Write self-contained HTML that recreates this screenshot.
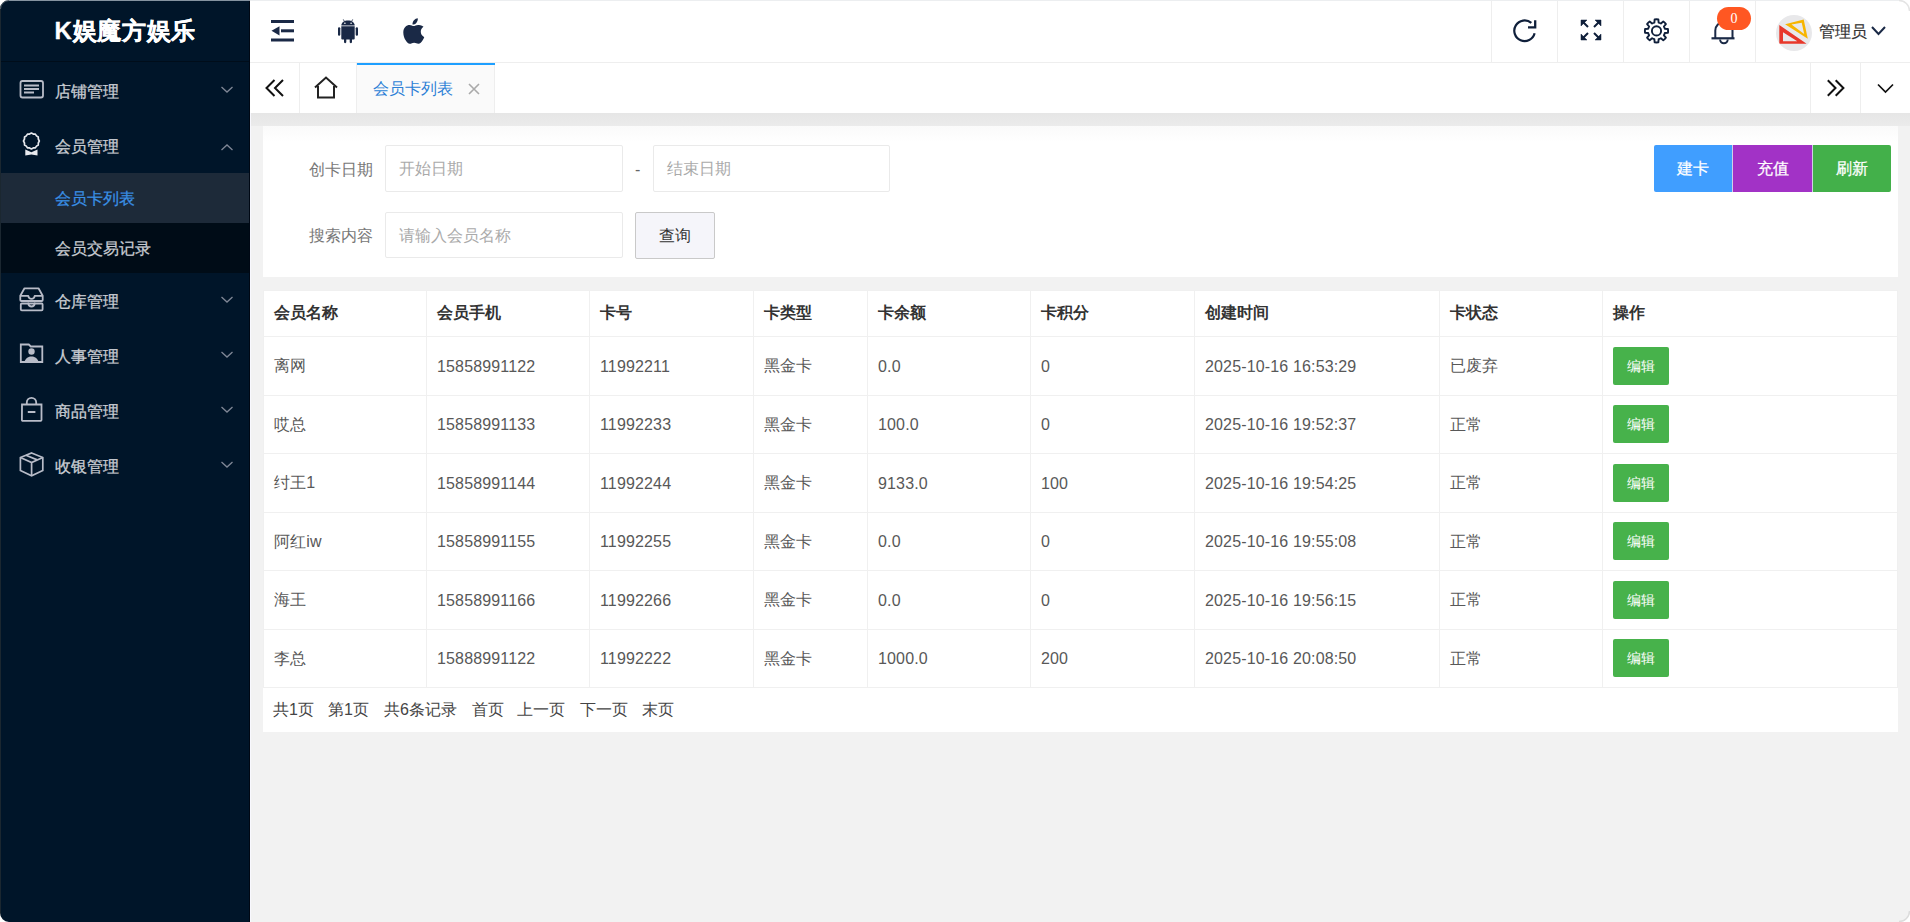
<!DOCTYPE html>
<html><head><meta charset="utf-8">
<style>
*{box-sizing:border-box;margin:0;padding:0}
html,body{width:1910px;height:922px;overflow:hidden;background:#f2f2f2;font-family:"Liberation Sans",sans-serif;font-size:16px;color:#333}
svg{position:absolute;overflow:visible}
#side{position:absolute;left:0;top:0;width:250px;height:922px;background:#001529}
#logo{position:absolute;left:0;top:0;width:250px;height:62px;border-bottom:1px solid #000d1a;color:#fff;font-size:24px;font-weight:bold;text-align:center;line-height:62px;letter-spacing:0.7px;text-indent:0.7px;-webkit-text-stroke:0.3px #fff}
.mi{position:absolute;left:0;width:250px;height:55px;color:#c8ccd2;font-size:16px}
.mi .t{position:absolute;left:55px;top:19.5px;line-height:20px;-webkit-text-stroke:0.3px #c8ccd2}
.sub{position:absolute;left:0;width:250px;height:50px;background:#000c17;color:#c8ccd2}
.sub .t{position:absolute;left:55px;top:16px;line-height:20px;-webkit-text-stroke:0.25px currentColor}
#hdr{position:absolute;left:250px;top:0;width:1660px;height:63px;background:#fff;border-bottom:1px solid #eee}
.hcell{position:absolute;top:0;height:62px;width:66px;border-left:1px solid #eee}
#tabs{position:absolute;left:250px;top:63px;width:1660px;height:50px;background:#fff}
#cont{position:absolute;left:250px;top:113px;width:1660px;height:809px;background:#f2f2f2}
.card{position:absolute;background:#fff}
.lbl{position:absolute;color:#777;line-height:20px}
.inp{position:absolute;border:1px solid #eaeaea;border-radius:2px;background:#fff;color:#aaa;line-height:20px;padding-left:13px}
.btn{position:absolute;color:#fff;text-align:center;line-height:47px;-webkit-text-stroke:0.25px #fff}
table{position:absolute;border-collapse:collapse;background:#fff;table-layout:fixed}
td,th{border:1px solid #f0f0f0;padding:0 0 0 10px;text-align:left;font-weight:normal;color:#333;white-space:nowrap}
th{font-weight:bold;height:46px;padding-top:0;color:#333}
td{height:58.5px;padding-top:2px;color:#585858;letter-spacing:0.15px}
td.op{padding-top:0}
.ed{display:inline-block;width:56px;letter-spacing:0;height:38px;line-height:38px;background:#47b24b;color:#fff;font-size:14px;text-align:center;border-radius:2px}
.pg{position:absolute;line-height:20px;color:#444}
</style></head><body>
<div id="side">
  <div id="logo">K娱魔方娱乐</div>
  <div class="mi" style="top:62px"><span class="t">店铺管理</span>
    <svg width="250" height="55" style="left:0;top:0" fill="none" stroke="#b8bcc8" stroke-width="1.8">
      <rect x="20.5" y="19" width="22.5" height="16.5" rx="2"/>
      <path d="M24 23.5h15M24 27h15M24 30.5h10"/>
      <path d="M221.5 25l5.5 5 5.5-5" stroke="#7f8796" stroke-width="1.3"/>
    </svg>
  </div>
  <div class="mi" style="top:117px"><span class="t">会员管理</span>
    <svg width="250" height="55" style="left:0;top:0" fill="none" stroke="#e8eaee" stroke-width="1.8">
      <path d="M39.30 24.00 L38.35 25.86 L38.24 27.95 L36.49 29.09 L35.35 30.84 L33.26 30.95 L31.40 31.90 L29.54 30.95 L27.45 30.84 L26.31 29.09 L24.56 27.95 L24.45 25.86 L23.50 24.00 L24.45 22.14 L24.56 20.05 L26.31 18.91 L27.45 17.16 L29.54 17.05 L31.40 16.10 L33.26 17.05 L35.35 17.16 L36.49 18.91 L38.24 20.05 L38.35 22.14Z" stroke-width="1.7" stroke-linejoin="round"/>
      <path d="M25.3 32.6l6.1 2.6 6.1-2.6v5.8l-6.1-1-6.1 1z" fill="#e8eaee" stroke="none"/>
      <path d="M221.5 33l5.5-5 5.5 5" stroke="#7f8796" stroke-width="1.3"/>
    </svg>
  </div>
  <div class="sub" style="top:173px;background:#1d2a39;color:#3a90e6"><span class="t">会员卡列表</span></div>
  <div class="sub" style="top:223px"><span class="t">会员交易记录</span></div>
  <div class="mi" style="top:272px"><span class="t">仓库管理</span>
    <svg width="250" height="55" style="left:0;top:0" fill="none" stroke="#b8bcc8" stroke-width="1.8" stroke-linejoin="round" stroke-linecap="round">
      <path d="M24.5 16.3h14l4.2 7.5v4.2a1 1 0 0 1-1 1h-20.4a1 1 0 0 1-1-1v-4.2z"/>
      <path d="M20.8 23.8h7.5c0.3 2 1.5 3 3.2 3s2.9-1 3.2-3h7.5"/>
      <path d="M21.8 31.5h19.8a1 1 0 0 1 1 1v4.8a1 1 0 0 1-1 1h-19.8a1 1 0 0 1-1-1v-4.8a1 1 0 0 1 1-1z"/>
      <path d="M28.3 31.5c0.3 2 1.5 3 3.2 3s2.9-1 3.2-3"/>
      <path d="M221.5 25l5.5 5 5.5-5" stroke="#7f8796" stroke-width="1.3" stroke-linecap="butt" stroke-linejoin="miter"/>
    </svg>
  </div>
  <div class="mi" style="top:327px"><span class="t">人事管理</span>
    <svg width="250" height="55" style="left:0;top:0" fill="none" stroke="#b8bcc8" stroke-width="1.8">
      <path d="M20.8 17.5h8l2 2h11.5v15.5h-21.5z"/>
      <circle cx="31.5" cy="24.5" r="3.2" fill="#b8bcc8" stroke="none"/>
      <path d="M24.5 35c1-4 4-5.5 7-5.5s6 1.5 7 5.5z" fill="#b8bcc8" stroke="none"/>
      <path d="M221.5 25l5.5 5 5.5-5" stroke="#7f8796" stroke-width="1.3"/>
    </svg>
  </div>
  <div class="mi" style="top:382px"><span class="t">商品管理</span>
    <svg width="250" height="55" style="left:0;top:0" fill="none" stroke="#b8bcc8" stroke-width="1.8">
      <path d="M22 22.5h19.5v15.5a0.8 0.8 0 0 1-0.8 0.8h-18a0.8 0.8 0 0 1-0.8-0.8z"/>
      <path d="M26.8 22.5v-2a4.7 4.7 0 0 1 9.4 0v2"/>
      <path d="M27.8 30h7.6" stroke-width="2"/>
      <path d="M221.5 25l5.5 5 5.5-5" stroke="#7f8796" stroke-width="1.3"/>
    </svg>
  </div>
  <div class="mi" style="top:437px"><span class="t">收银管理</span>
    <svg width="250" height="55" style="left:0;top:0" fill="none" stroke="#b8bcc8" stroke-width="1.7">
      <path d="M31.6 16l11.2 4.5v13l-11.2 5.3-11.2-5.3v-13z"/>
      <path d="M20.4 20.5l11.2 5 11.2-5M31.6 25.5v13.3"/>
      <path d="M26 18.3l11.2 4.6"/>
      <path d="M221.5 25l5.5 5 5.5-5" stroke="#7f8796" stroke-width="1.3"/>
    </svg>
  </div>
</div>
<div style="position:absolute;left:249px;top:0;width:1px;height:922px;background:#000814;z-index:5"></div>
<div style="position:absolute;left:250px;top:113px;width:1px;height:809px;background:#f8f8fe;z-index:5"></div>
<div id="hdr">
  <svg width="30" height="30" style="left:21px;top:20px" fill="#1a2946">
    <rect x="0" y="0" width="23" height="3"/><rect x="10" y="9.3" width="13" height="3"/><rect x="0" y="18.5" width="23" height="3"/>
    <path d="M0.5 10.8l8-4.6v9.2z"/>
  </svg>
  <svg width="20" height="25" style="left:87.7px;top:18.8px" viewBox="0 0 20 25" fill="#1a2946">
    <path d="M5.3 0.4l1.2 2.2M14.7 0.4l-1.2 2.2" stroke="#1a2946" stroke-width="0.8"/>
    <path d="M3.3 6.4c0.2-2.9 3-4.9 6.7-4.9s6.5 2 6.7 4.9z"/>
    <circle cx="6.9" cy="4.2" r="0.8" fill="#fff"/><circle cx="13.1" cy="4.2" r="0.8" fill="#fff"/>
    <path d="M3.3 7.3h13.4v12.2a1 1 0 0 1-1 1h-11.4a1 1 0 0 1-1-1z"/>
    <rect x="0" y="8.2" width="2.3" height="8.6" rx="1.15"/><rect x="17.7" y="8.2" width="2.3" height="8.6" rx="1.15"/>
    <rect x="6" y="19" width="2.3" height="5.2" rx="1.1"/><rect x="11.7" y="19" width="2.3" height="5.2" rx="1.1"/>
  </svg>
  <svg width="22" height="26" style="left:153px;top:18px" viewBox="0 0 22 26" fill="#1a2946">
    <path d="M14.8 0.3c0.2 2-0.6 3.6-1.5 4.6-1 1.1-2.4 1.8-3.8 1.7-0.2-1.7 0.6-3.4 1.5-4.4 1-1.1 2.5-1.8 3.8-1.9z"/>
    <path d="M20.6 8.8c-0.1 0.1-2.8 1.6-2.8 4.9 0 3.8 3.4 5.2 3.5 5.2-0.1 0.1-0.6 1.8-1.8 3.6-1.1 1.6-2.3 3.2-4.1 3.2s-2.3-1-4.3-1-2.6 1.1-4.3 1.1-2.9-1.6-4-3.2C1.4 20.7 0.3 17.5 0.3 14.5c0-4.9 3.2-7.5 6.3-7.5 1.7 0 3 1.1 4.1 1.1 1 0 2.5-1.2 4.4-1.2 0.7 0 3.4 0.1 5.5 1.9z"/>
  </svg>
  <div class="hcell" style="left:1241px"><svg width="66" height="62" style="left:0;top:0" fill="none" stroke="#0f1f3a" stroke-width="2.2">
    <path d="M42.6 33.2A10.3 10.3 0 1 1 39.3 22.9"/><path d="M36 27.3H43.2V20.3" stroke-width="2.3"/></svg></div>
  <div class="hcell" style="left:1307px"><svg width="22" height="22" style="left:22px;top:19px" viewBox="0 0 22 22" fill="#0f1f3a" stroke="#0f1f3a" stroke-width="2">
    <path d="M2 2l6 6M20 2l-6 6M2 20l6-6M20 20l-6-6" fill="none"/>
    <path d="M1 1h6l-6 6zM21 1h-6l6 6zM1 21h6l-6-6zM21 21h-6l6-6z" stroke-width="0.5"/>
  </svg></div>
  <div class="hcell" style="left:1373px"><svg width="66" height="62" style="left:0;top:0" fill="none" stroke="#0f1f3a" stroke-width="1.9" stroke-linejoin="round">
    <path d="M30.37 22.57L30.65 19.45A11.60 11.60 0 0 1 34.35 19.45L34.63 22.57A8.60 8.60 0 0 1 36.89 23.50L39.29 21.50A11.60 11.60 0 0 1 41.90 24.11L39.90 26.51A8.60 8.60 0 0 1 40.83 28.77L43.95 29.05A11.60 11.60 0 0 1 43.95 32.75L40.83 33.03A8.60 8.60 0 0 1 39.90 35.29L41.90 37.69A11.60 11.60 0 0 1 39.29 40.30L36.89 38.30A8.60 8.60 0 0 1 34.63 39.23L34.35 42.35A11.60 11.60 0 0 1 30.65 42.35L30.37 39.23A8.60 8.60 0 0 1 28.11 38.30L25.71 40.30A11.60 11.60 0 0 1 23.10 37.69L25.10 35.29A8.60 8.60 0 0 1 24.17 33.03L21.05 32.75A11.60 11.60 0 0 1 21.05 29.05L24.17 28.77A8.60 8.60 0 0 1 25.10 26.51L23.10 24.11A11.60 11.60 0 0 1 25.71 21.50L28.11 23.50A8.60 8.60 0 0 1 30.37 22.57Z"/><circle cx="32.5" cy="30.9" r="4.6"/></svg></div>
  <div class="hcell" style="left:1439px">
    <svg width="66" height="62" style="left:0;top:0" fill="none" stroke="#1a2946" stroke-width="2">
      <path d="M25.3 38v-7.5a8.6 8.6 0 0 1 17.2 0v7.5"/><path d="M21.5 38.3h23" stroke-width="2.2"/><path d="M30.1 39.5a3.8 3.8 0 0 0 7.6 0"/>
    </svg>
    <div style="position:absolute;left:27px;top:7px;width:34px;height:23px;border-radius:11.5px;background:#ff5722;color:#fff;font-size:14px;text-align:center;line-height:23px;font-family:'Liberation Serif',serif">0</div>
  </div>
  <div class="hcell" style="left:1505px;width:155px">
    <div style="position:absolute;left:20px;top:15px;width:36px;height:36px;border-radius:50%;background:#e8e8ea;overflow:hidden">
      <svg width="36" height="36" style="left:0;top:0" viewBox="0 0 36 36">
        <path fill-rule="evenodd" fill="#e8372a" d="M3.3 10.1L30.6 28.7H3.3z M7 17.2V26.2H21.3z"/>
        <path fill-rule="evenodd" fill="#f7b500" d="M9.1 9.2L27.7 4.5L31.8 23.8z M15.5 9.6L28.2 18.9L25.7 7.7z"/>
      </svg>
    </div>
    <div style="position:absolute;left:63px;top:21.5px;line-height:20px;color:#333;font-size:16px;-webkit-text-stroke:0.2px #333">管理员</div>
    <svg width="16" height="10" style="left:115px;top:26px" fill="none" stroke="#1a2946" stroke-width="2"><path d="M1 1l6.5 7 6.5-7"/></svg>
  </div>
</div>
<div id="tabs">
  <svg width="22" height="20" style="left:15px;top:15px" fill="none" stroke="#111" stroke-width="2"><path d="M9.5 2l-8 8 8 8M18 2l-8 8 8 8"/></svg>
  <div style="position:absolute;left:49px;top:0;width:1px;height:50px;background:#eee"></div>
  <svg width="26" height="24" style="left:64px;top:13px" fill="none" stroke="#222" stroke-width="2"><path d="M1 11.5L12 1.5l11 10"/><path d="M4 10v11.5h16V10"/></svg>
  <div style="position:absolute;left:106px;top:0;width:139px;height:50px;background:#fafafa;border-left:1px solid #eee;border-right:1px solid #eee">
    <div style="position:absolute;left:0;top:0;width:138px;height:2px;background:#1e9fff"></div>
    <div style="position:absolute;left:16px;top:16px;line-height:20px;color:#2b7fd6">会员卡列表</div>
    <svg width="12" height="12" style="left:111px;top:20px" fill="none" stroke="#aaa" stroke-width="1.6"><path d="M1 1l10 10M11 1l-10 10"/></svg>
  </div>
  <div style="position:absolute;left:1560px;top:0;width:1px;height:50px;background:#eee"></div>
  <svg width="20" height="20" style="left:1577px;top:15px" fill="none" stroke="#111" stroke-width="2"><path d="M0.8 2.3l7.7 7.7-7.7 7.7M8.7 2.3l7.7 7.7-7.7 7.7"/></svg>
  <div style="position:absolute;left:1610px;top:0;width:1px;height:50px;background:#eee"></div>
  <svg width="18" height="12" style="left:1627px;top:19.5px" fill="none" stroke="#111" stroke-width="1.7"><path d="M1 1.5l7.5 7.5 7.5-7.5"/></svg>
</div>
<div id="cont">
  <div style="position:absolute;left:0;top:0;width:1660px;height:13px;background:linear-gradient(#e6e6e6,#ebebeb)"></div>
  <div class="card" style="left:13px;top:13px;width:1635px;height:151px;background:linear-gradient(#fafafa,#fff 16px)">
    <div class="lbl" style="left:46px;top:34px">创卡日期</div>
    <div class="inp" style="left:122px;top:19px;width:238px;height:47px;line-height:45px">开始日期</div>
    <div class="lbl" style="left:372px;top:34px;color:#666">-</div>
    <div class="inp" style="left:390px;top:19px;width:237px;height:47px;line-height:45px">结束日期</div>
    <div class="lbl" style="left:46px;top:100px">搜索内容</div>
    <div class="inp" style="left:122px;top:86px;width:238px;height:46px;line-height:45px">请输入会员名称</div>
    <div style="position:absolute;left:372px;top:86px;width:80px;height:47px;border:1px solid #c9c9c9;border-radius:2px;background:#f5f5fa;text-align:center;line-height:45px;color:#333">查询</div>
    <div style="position:absolute;left:1465px;top:19px;width:90px;height:47px;background:#d0d0e6"></div>
    <div class="btn" style="left:1391px;top:19px;width:78px;height:47px;background:#409eff;border-radius:2px 0 0 2px">建卡</div>
    <div class="btn" style="left:1470px;top:19px;width:79px;height:47px;background:#a232c6">充值</div>
    <div class="btn" style="left:1550px;top:19px;width:78px;height:47px;background:#43b04a;border-radius:0 2px 2px 0">刷新</div>
  </div>
  <div class="card" style="left:13px;top:177px;width:1635px;height:442px"></div>
<table style="left:13px;top:177px;width:1634px">
<colgroup><col style="width:163px"><col style="width:163px"><col style="width:164px"><col style="width:114px"><col style="width:163px"><col style="width:164px"><col style="width:245px"><col style="width:163px"><col style="width:295px"></colgroup>
<tr><th>会员名称</th><th>会员手机</th><th>卡号</th><th>卡类型</th><th>卡余额</th><th>卡积分</th><th>创建时间</th><th>卡状态</th><th>操作</th></tr>
<tr><td>离网</td><td>15858991122</td><td>11992211</td><td>黑金卡</td><td>0.0</td><td>0</td><td>2025-10-16 16:53:29</td><td>已废弃</td><td class="op"><span class="ed">编辑</span></td></tr>
<tr><td>哎总</td><td>15858991133</td><td>11992233</td><td>黑金卡</td><td>100.0</td><td>0</td><td>2025-10-16 19:52:37</td><td>正常</td><td class="op"><span class="ed">编辑</span></td></tr>
<tr><td>纣王1</td><td>15858991144</td><td>11992244</td><td>黑金卡</td><td>9133.0</td><td>100</td><td>2025-10-16 19:54:25</td><td>正常</td><td class="op"><span class="ed">编辑</span></td></tr>
<tr><td>阿红iw</td><td>15858991155</td><td>11992255</td><td>黑金卡</td><td>0.0</td><td>0</td><td>2025-10-16 19:55:08</td><td>正常</td><td class="op"><span class="ed">编辑</span></td></tr>
<tr><td>海王</td><td>15858991166</td><td>11992266</td><td>黑金卡</td><td>0.0</td><td>0</td><td>2025-10-16 19:56:15</td><td>正常</td><td class="op"><span class="ed">编辑</span></td></tr>
<tr><td>李总</td><td>15888991122</td><td>11992222</td><td>黑金卡</td><td>1000.0</td><td>200</td><td>2025-10-16 20:08:50</td><td>正常</td><td class="op"><span class="ed">编辑</span></td></tr>
</table>

  <div class="pg" style="left:23px;top:587px">共1页</div>
  <div class="pg" style="left:78px;top:587px">第1页</div>
  <div class="pg" style="left:134px;top:587px">共6条记录</div>
  <div class="pg" style="left:222px;top:587px">首页</div>
  <div class="pg" style="left:267px;top:587px">上一页</div>
  <div class="pg" style="left:330px;top:587px">下一页</div>
  <div class="pg" style="left:392px;top:587px">末页</div>
</div>
<div style="position:absolute;left:0;top:0;width:1910px;height:1px;background:#eceef0;z-index:20"></div>
<div style="position:absolute;left:0;top:0;width:250px;height:1px;background:#8593a0;z-index:21"></div>
<div style="position:absolute;left:0;top:0;width:1px;height:922px;background:#1b2730;z-index:21"></div>
<svg width="10" height="10" style="left:0;top:0;z-index:22"><path d="M0 0H9A9 9 0 0 0 0 9Z" fill="#fff"/><path d="M9 0.5A8.5 8.5 0 0 0 0.5 9" fill="none" stroke="#56626c" stroke-width="1"/></svg>
<svg width="10" height="10" style="left:0;top:912px;z-index:22"><path d="M0 10V1A9 9 0 0 0 9 10Z" fill="#fff"/></svg>
<svg width="12" height="12" style="left:1898px;top:0;z-index:22"><path d="M12 0H1A11 11 0 0 1 12 11Z" fill="#fff"/><path d="M1 0.5A10.5 10.5 0 0 1 11.5 11" fill="none" stroke="#e4e4e4" stroke-width="1.5"/></svg>
<svg width="12" height="12" style="left:1898px;top:910px;z-index:22"><path d="M12 12V1A11 11 0 0 1 1 12Z" fill="#fff"/><path d="M11.5 1A10.5 10.5 0 0 1 1 11.5" fill="none" stroke="#dcdcdc" stroke-width="1.5"/></svg>
</body></html>
